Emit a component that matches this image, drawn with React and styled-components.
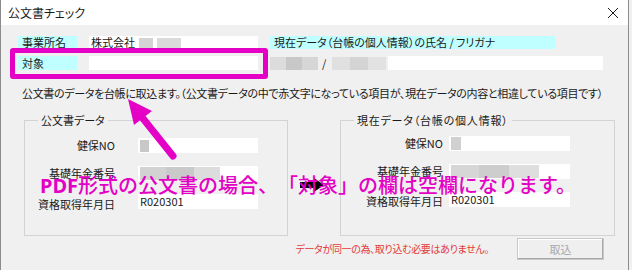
import React from "react";
import styled, { createGlobalStyle } from "styled-components";

const Global = createGlobalStyle`
  html, body { margin: 0; padding: 0; background: #f0f0f0; }
  body { font-family: "Noto Sans CJK JP", "Noto Sans", sans-serif; }
`;

const MAGENTA = "#e400c4";

const Window = styled.div`
  position: relative;
  width: 629px;
  height: 270px;
  box-sizing: border-box;
  background: #f0f0f0;
  border-left: 1px solid #8c8c8c;
  border-right: 1px solid #8c8c8c;
  overflow: hidden;
  font-family: "Noto Sans CJK JP", sans-serif;
  font-feature-settings: "palt";
  color: #1a1a1a;
`;

const TitleBar = styled.div`
  height: 25px;
  background: #ffffff;
  display: flex;
  align-items: center;
  justify-content: space-between;
  padding: 0 9px 0 7px;
  box-sizing: border-box;
`;

const TitleText = styled.span`
  font-size: 12px;
  line-height: 14px;
  color: #1a1a1a;
`;

const Header = styled.div`
  display: grid;
  grid-template-columns: 59px 169px 333px;
  grid-template-rows: 13px 14px;
  column-gap: 12px;
  row-gap: 7px;
  padding: 11px 0 0 17px;
`;

const CyanLabel = styled.div`
  background: #c0ffff;
  font-size: 11px;
  line-height: ${(p) => p.$h || 13}px;
  height: ${(p) => p.$h || 13}px;
  padding-left: 4px;
  width: ${(p) => (p.$w ? `${p.$w}px` : "auto")};
  box-sizing: border-box;
  white-space: nowrap;
`;

const Field = styled.div`
  background: #ffffff;
  height: ${(p) => p.$h || 14}px;
  font-size: 11px;
  line-height: ${(p) => p.$h || 14}px;
  padding-left: 2px;
  display: flex;
  align-items: center;
  gap: ${(p) => p.$gap || 0}px;
  flex: ${(p) => (p.$grow ? 1 : "none")};
  box-sizing: border-box;
  white-space: nowrap;
`;

const Blur = styled.span`
  display: inline-block;
  width: ${(p) => p.$w}px;
  height: ${(p) => p.$h || 11}px;
  background: ${(p) => p.$c || "#cfcfcf"};
  filter: blur(0.6px);
  flex: none;
`;

const NameRow = styled.div`
  display: flex;
  align-items: center;
  height: 14px;
`;

const NameMask = styled.div`
  display: flex;
  align-items: center;
  width: 118px;
  height: 14px;
  font-size: 11px;
  flex: none;
`;

const Slash = styled.span`
  margin: 0 6px 0 4px;
  font-size: 11px;
  line-height: 14px;
`;

const Instruction = styled.div`
  margin-top: 16px;
  padding-left: 21px;
  font-size: 11px;
  line-height: 14px;
  letter-spacing: -0.32px;
  white-space: nowrap;
`;

const Groups = styled.div`
  display: grid;
  grid-template-columns: 264px 52px 275px;
  margin-top: 13px;
  padding-left: 23px;
`;

const GroupBox = styled.fieldset`
  margin: 0;
  height: 123px;
  box-sizing: border-box;
  border: 1px solid #d3d3d3;
  padding: ${(p) => p.$pt}px 0 0 5px;
  min-width: 0;
`;

const Legend = styled.legend`
  margin-left: 8px;
  padding: 0 3px;
  font-size: 11px;
  line-height: 14px;
  letter-spacing: ${(p) => p.$ls || 0}px;
`;

const FieldGrid = styled.div`
  display: grid;
  grid-template-columns: ${(p) => p.$label}px ${(p) => p.$field}px;
  grid-auto-rows: 15px;
  row-gap: 13px;
  column-gap: ${(p) => p.$gap}px;
`;

const RowLabel = styled.div`
  text-align: right;
  font-size: 11px;
  line-height: 15px;
  padding-top: ${(p) => p.$drop || 0}px;
  white-space: nowrap;
`;

const ArrowCell = styled.div`
  display: flex;
  align-items: center;
  justify-content: center;
  padding-top: 20px;
  padding-right: 4px;
`;

const Footer = styled.div`
  display: flex;
  justify-content: flex-end;
  align-items: center;
  gap: 28px;
  margin-top: 2px;
  padding-right: 24px;
`;

const ErrorText = styled.span`
  color: #e23b3b;
  font-size: 10px;
  line-height: 14px;
  letter-spacing: -0.35px;
`;

const Button = styled.button`
  width: 87px;
  height: 22px;
  border: 1px solid #c9c9c9;
  background: #efefef;
  box-shadow: inset -1px -1px 0 #a8a8a8, inset 1px 1px 0 #ffffff;
  color: #a8a8a8;
  font-family: "Noto Sans CJK JP", sans-serif;
  font-feature-settings: "palt";
  font-size: 11px;
  padding: 0;
`;

const Highlight = styled.div`
  position: absolute;
  left: 9px;
  top: 48px;
  width: 258px;
  height: 31px;
  box-sizing: border-box;
  border: 5px solid ${MAGENTA};
  border-radius: 3px;
  pointer-events: none;
`;

const Overlay = styled.svg`
  position: absolute;
  left: -1px;
  top: 0;
  pointer-events: none;
`;

const Note = styled.div`
  position: absolute;
  left: 39px;
  top: 171px;
  font-family: "Noto Sans CJK JP", sans-serif;
  font-feature-settings: normal;
  text-spacing-trim: space-all;
  font-size: 20px;
  line-height: 28px;
  font-weight: 500;
  color: ${MAGENTA};
  white-space: nowrap;
  pointer-events: none;
`;

const Bold = styled.span`
  font-weight: 700;
  font-family: "Noto Sans", "Noto Sans CJK JP", sans-serif;
`;

function CloseIcon() {
  return (
    <svg width="12" height="12" viewBox="0 0 12 12">
      <path d="M1 1 L11 11 M11 1 L1 11" stroke="#1a1a1a" strokeWidth="1" fill="none" />
    </svg>
  );
}

function BlackArrow() {
  return (
    <svg width="24" height="14" viewBox="0 0 24 14">
      <path d="M0 4 H14 V0 L24 7 L14 14 V10 H0 Z" fill="#000" />
    </svg>
  );
}

function Callout() {
  return (
    <Overlay width="632" height="270" viewBox="0 0 632 270">
      <line x1="173" y1="156" x2="141" y2="116" stroke={MAGENTA} strokeWidth="7" strokeLinecap="round" />
      <polygon points="128,99 152,111 134,125" fill={MAGENTA} />
    </Overlay>
  );
}

function DataGroup({ title, labelW, gap, fieldW, rows, legendLs, pt }) {
  return (
    <GroupBox $pt={pt}>
      <Legend $ls={legendLs}>{title}</Legend>
      <FieldGrid $label={labelW} $field={fieldW} $gap={gap}>
        {rows.map((r) => (
          <React.Fragment key={r.label}>
            <RowLabel $drop={r.drop}>{r.label}</RowLabel>
            <Field $h={15}>{r.value}</Field>
          </React.Fragment>
        ))}
      </FieldGrid>
    </GroupBox>
  );
}

export default function App() {
  const leftRows = [
    { label: "健保NO", value: <Blur $w={9} $h={12} $c="#c8c8c8" /> },
    {
      label: "基礎年金番号",
      value: (
        <>
          <Blur $w={26} $h={13} $c="#d2d2d2" />
          <Blur $w={28} $h={13} $c="#c9c9c9" />
          <Blur $w={26} $h={13} $c="#dcdcdc" />
        </>
      ),
    },
    { label: "資格取得年月日", value: "R020301", drop: 3 },
  ];
  const rightRows = [
    { label: "健保NO", value: <Blur $w={10} $h={13} $c="#d0d0d0" /> },
    {
      label: "基礎年金番号",
      value: (
        <>
          <Blur $w={28} $h={13} $c="#d6d6d6" />
          <Blur $w={30} $h={13} $c="#cdcdcd" />
          <Blur $w={30} $h={13} $c="#dedede" />
        </>
      ),
    },
    { label: "資格取得年月日", value: "R020301", drop: 2 },
  ];

  return (
    <Window>
      <Global />
      <TitleBar>
        <TitleText>公文書チェック</TitleText>
        <CloseIcon />
      </TitleBar>

      <Header>
        <CyanLabel>事業所名</CyanLabel>
        <Field $h={13} $gap={4}>
          株式会社
          <Blur $w={14} $h={10} $c="#d4d4d4" />
          <Blur $w={24} $h={10} $c="#dadada" />
        </Field>
        <CyanLabel $w={285}>現在データ（台帳の個人情報）の氏名 / フリガナ</CyanLabel>

        <CyanLabel $h={14}>対象</CyanLabel>
        <Field />
        <NameRow>
          <NameMask>
            <Blur $w={16} $h={13} $c="#dcdcdc" />
            <Blur $w={16} $h={13} $c="#c8c8c8" />
            <Blur $w={16} $h={13} $c="#d6d6d6" />
            <Slash>/</Slash>
            <Blur $w={18} $h={13} $c="#e0e0e0" />
            <Blur $w={18} $h={13} $c="#d4d4d4" />
            <Blur $w={18} $h={13} $c="#e2e2e2" />
          </NameMask>
          <Field $grow />
        </NameRow>
      </Header>

      <Instruction>
        公文書のデータを台帳に取込ます。（公文書データの中で赤文字になっている項目が、現在データの内容と相違している項目です）
      </Instruction>

      <Groups>
        <DataGroup title="公文書データ" labelW={85} gap={23} fieldW={120} rows={leftRows} pt={11} />
        <ArrowCell>
          <BlackArrow />
        </ArrowCell>
        <DataGroup
          title="現在データ（台帳の個人情報）"
          labelW={97}
          gap={6}
          fieldW={121}
          rows={rightRows}
          legendLs={0.8}
          pt={9}
        />
      </Groups>

      <Footer>
        <ErrorText>データが同一の為、取り込む必要はありません。</ErrorText>
        <Button disabled>取込</Button>
      </Footer>

      <Highlight />
      <Callout />
      <Note>
        <Bold>PDF</Bold>形式の公文書の場合、「対象」の欄は空欄になります。
      </Note>
    </Window>
  );
}
